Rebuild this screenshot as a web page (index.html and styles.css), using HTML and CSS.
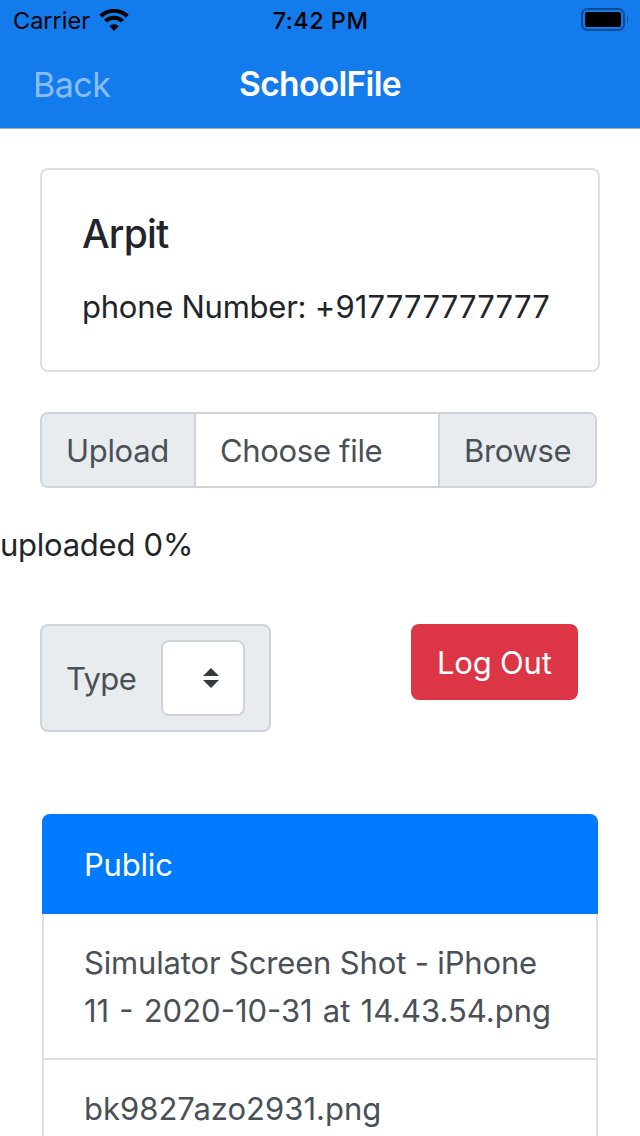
FILE: index.html
```html
<!DOCTYPE html>
<html lang="en">
<head>
<meta charset="utf-8">
<title>SchoolFile</title>
<link rel="stylesheet" href="styles.css">
</head>
<body>
<header class="header">
  <div class="status">
    <div class="status-left">
      <span class="carrier">Carrier</span>
      <svg class="wifi" width="30" height="23" viewBox="0 0 30 23">
        <path d="M1.7 7.3A19 19 0 0 1 28.3 7.3" fill="none" stroke="#000" stroke-width="4"/>
        <path d="M6.4 12.2A12.2 12.2 0 0 1 23.6 12.2" fill="none" stroke="#000" stroke-width="4"/>
        <path d="M10.4 17A6.7 6.7 0 0 1 19.6 17L15 21.9Z"/>
      </svg>
    </div>
    <span class="time">7:42 PM</span>
    <svg class="battery" width="48" height="24" viewBox="0 0 48 24">
      <rect x="2" y="2" width="42" height="21" rx="5.5" fill="none" stroke="#0c4c91" stroke-width="2"/>
      <rect x="5" y="5" width="36" height="15" rx="2.5"/>
      <path d="M47 9Q50 12.500 47 16Z" fill="#0c4c91"/>
    </svg>
  </div>
  <nav class="nav">
    <span class="back">Back</span>
    <span class="title">SchoolFile</span>
  </nav>
</header>
<main class="main">
  <section class="card">
    <h5 class="name">Arpit</h5>
    <p class="phone"><span class="phone-label">phone Number: </span>+917777777777</p>
  </section>
  <div class="file-group">
    <span class="file-label">Upload</span>
    <span class="file-input">Choose file</span>
    <span class="file-browse">Browse</span>
  </div>
  <p class="progress">uploaded 0%</p>
  <div class="actions">
    <div class="type">
      <span class="type-text">Type</span>
      <span class="select">
        <svg width="16" height="20" viewBox="0 0 16 20"><path d="M0 8L8 0L16 8ZM0 12H16L8 20Z" fill="#343a40"/></svg>
      </span>
    </div>
    <button class="logout">Log Out</button>
  </div>
  <ul class="list">
    <li class="item active">Public</li>
    <li class="item"><span class="file-title">Simulator Screen Shot - iPhone</span><br><span class="file-date">11 - 2020-10-31 at 14.43.54.png</span></li>
    <li class="item">bk9827azo2931.png</li>
  </ul>
</main>
</body>
</html>
```

FILE: styles.css
```css
* { box-sizing: border-box; }
body {
  margin: 0;
  height: 1136px;
  overflow: hidden;
  background: #fff;
  color: #212529;
  font: 400 31px/48px Inter, "Liberation Sans", sans-serif;
  white-space: nowrap;
}
.header { height: 129px; background: #147bec; border-bottom: 1px solid #a5abb2; }
.status {
  display: grid;
  grid-template-columns: 1fr auto 1fr;
  height: 40px;
  padding: 0 12px 0 13px;
  align-items: center;
  color: #000;
  font-size: 23.5px;
  line-height: 42px;
}
.status-left { display: flex; align-items: center; gap: 9px; }
.wifi { margin-bottom: 2px; }
.time { font-weight: 500; letter-spacing: 0.45px; }
.battery { justify-self: end; margin-bottom: 4px; }
.nav {
  display: grid;
  grid-template-columns: 1fr auto 1fr;
  height: 88px;
  padding: 1px 33px 0;
  align-items: center;
  font-size: 34px;
  line-height: 88px;
}
.back { color: #89bdf5; letter-spacing: -0.5px; }
.title { padding-bottom: 2px; color: #fff; font-size: 33.5px; line-height: 86px; font-weight: 600; letter-spacing: -0.65px; }
.main { padding-top: 39px; }
.card {
  margin: 0 40px;
  height: 204px;
  padding: 40px;
  border: 2px solid #dfdfdf;
  border-radius: 8px;
}
.name { margin: 0 0 25px; font-size: 39px; line-height: 48px; font-weight: 500; letter-spacing: -0.8px; }
.phone { margin: 0; letter-spacing: 0.15px; }
.phone-label { letter-spacing: -0.25px; }
.file-group {
  display: flex;
  width: 557px;
  height: 76px;
  margin: 40px 0 0 40px;
  border: 2px solid #ced4da;
  border-radius: 8px;
  overflow: hidden;
  color: #495057;
  line-height: 73px;
  letter-spacing: -0.32px;
}
.file-label { width: 154px; padding-left: 24px; background: #e9ecef; border-right: 2px solid #ced4da; }
.file-input { flex: 1; padding-left: 24px; }
.file-browse { width: 157px; padding-left: 24px; background: #e9ecef; border-left: 2px solid #ced4da; }
.progress { margin: 33px 0 0; letter-spacing: -0.25px; }
.actions { display: flex; justify-content: space-between; align-items: flex-start; margin: 55px 62px 0 40px; }
.type {
  display: flex;
  justify-content: space-between;
  align-items: center;
  width: 231px;
  height: 108px;
  padding: 0 24px;
  border: 2px solid #ced4da;
  border-radius: 8px;
  background: #e9ecef;
  color: #495057;
}
.type-text { padding-top: 2px; letter-spacing: -0.6px; }
.select {
  display: flex;
  align-items: center;
  justify-content: flex-end;
  width: 84px;
  height: 76px;
  padding-right: 24px;
  border: 2px solid #ced4da;
  border-radius: 8px;
  background: #fff;
}
.logout {
  width: 167px;
  height: 76px;
  padding: 2px 0 0 26px;
  border: 0;
  border-radius: 8px;
  background: #dc3545;
  color: #fff;
  font: inherit;
  line-height: 74px;
  letter-spacing: -0.2px;
  text-align: left;
}
.list { margin: 82px 42px 0; padding: 0; list-style: none; }
.item { padding: 25px 40px 23px; border: 2px solid #dfdfdf; border-top: 0; color: #495057; }
.file-title { letter-spacing: -0.16px; }
.file-date { word-spacing: 1.4px; }
.active {
  height: 100px;
  padding: 27px 42px 25px;
  border: 0;
  border-radius: 8px 8px 0 0;
  background: #007bff;
  color: #fff;
  letter-spacing: -0.2px;
}
```
